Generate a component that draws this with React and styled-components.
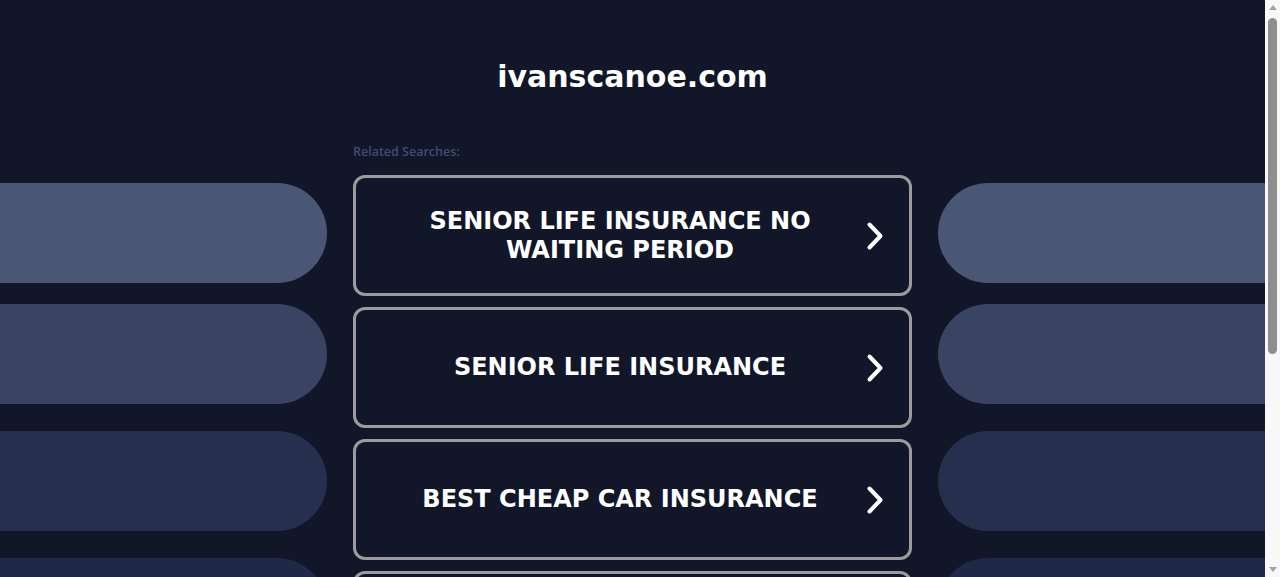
import React from "react";
import styled, { createGlobalStyle } from "styled-components";

const Global = createGlobalStyle`
  html, body { margin: 0; padding: 0; background: #111729; height: 100%; overflow: hidden; }
  body { font-family: "DejaVu Sans", sans-serif; }
  #root { height: 100%; }
`;

const Frame = styled.div`
  display: flex;
  height: 100vh;
`;

const Page = styled.div`
  flex: 1;
  min-width: 0;
  background: #111729;
  padding-top: 58px;
  box-sizing: border-box;
  overflow: hidden;
`;

const Scrollbar = styled.div`
  width: 15px;
  flex: none;
  background: #f8f8f8;
  display: flex;
  flex-direction: column;
  align-items: center;
`;

const ScrollArrow = styled.div`
  height: 15px;
  width: 15px;
  display: flex;
  align-items: center;
  justify-content: center;
  &::before {
    content: "";
    width: 0;
    height: 0;
    border-left: 4.5px solid transparent;
    border-right: 4.5px solid transparent;
    ${(p) =>
      p.$dir === "up"
        ? "border-bottom: 5px solid #a3a3a3;"
        : "border-top: 5px solid #a3a3a3;"}
  }
`;

const ScrollTrack = styled.div`
  flex: 1;
  width: 100%;
  display: flex;
  flex-direction: column;
  align-items: center;
`;

const ScrollThumb = styled.div`
  margin-top: 3px;
  width: 9px;
  height: 336px;
  border-radius: 5px;
  background: #8e8e8e;
`;

const Title = styled.h1`
  margin: 0;
  text-align: center;
  color: #ffffff;
  font-family: "DejaVu Sans", sans-serif;
  font-weight: 700;
  font-size: 30px;
  line-height: 38px;
`;

const Layout = styled.div`
  display: grid;
  grid-template-columns: 1fr 559px 1fr;
  column-gap: 26px;
  align-items: start;
  margin-top: 47px;
`;

const Side = styled.div`
  display: flex;
  flex-direction: column;
  padding-top: 40px;
`;

const Pill = styled.div`
  height: 100px;
  flex: none;
  background: ${(p) => p.$color};
  margin-top: ${(p) => p.$gap}px;
  border-radius: ${(p) => (p.$side === "left" ? "0 50px 50px 0" : "50px 0 0 50px")};
`;

const Center = styled.div`
  display: flex;
  flex-direction: column;
`;

const Label = styled.div`
  font-family: "Open Sans", sans-serif;
  font-weight: 600;
  font-size: 12.5px;
  line-height: 18px;
  color: #414c6d;
  margin-bottom: 14px;
`;

const List = styled.div`
  display: flex;
  flex-direction: column;
  gap: 11px;
`;

const Result = styled.a`
  box-sizing: border-box;
  height: 121px;
  flex: none;
  border: 3px solid #9b9b9b;
  border-radius: 12px;
  display: flex;
  align-items: center;
  padding: 0 25px 0 48px;
  gap: 30px;
  text-decoration: none;
  background: #111729;
`;

const ResultText = styled.span`
  flex: 1;
  text-align: center;
  color: #ffffff;
  font-family: "DejaVu Sans", sans-serif;
  font-weight: 700;
  font-size: 24px;
  line-height: 29px;
  text-transform: uppercase;
`;

const Chevron = () => (
  <svg width="18" height="30" viewBox="0 0 18 30" fill="none">
    <polyline
      points="3.5,3.5 14.5,15 3.5,26.5"
      stroke="#ffffff"
      strokeWidth="4"
      strokeLinecap="round"
      strokeLinejoin="round"
    />
  </svg>
);

const pills = [
  { color: "#4b5574", gap: 0 },
  { color: "#3a4361", gap: 21 },
  { color: "#262f4d", gap: 27 },
  { color: "#1f2847", gap: 27 },
];

const searches = [
  "Senior Life Insurance No Waiting Period",
  "Senior Life Insurance",
  "Best Cheap Car Insurance",
  "Medicare Supplement Plans",
];

export default function App() {
  return (
    <>
      <Global />
      <Frame>
        <Page>
          <Title>ivanscanoe.com</Title>
          <Layout>
            <Side>
              {pills.map((p, i) => (
                <Pill key={i} $color={p.color} $gap={p.gap} $side="left" />
              ))}
            </Side>
            <Center>
              <Label>Related Searches:</Label>
              <List>
                {searches.map((s) => (
                  <Result key={s} href="#">
                    <ResultText>{s}</ResultText>
                    <Chevron />
                  </Result>
                ))}
              </List>
            </Center>
            <Side>
              {pills.map((p, i) => (
                <Pill key={i} $color={p.color} $gap={p.gap} $side="right" />
              ))}
            </Side>
          </Layout>
        </Page>
        <Scrollbar aria-hidden="true">
          <ScrollArrow $dir="up" />
          <ScrollTrack>
            <ScrollThumb />
          </ScrollTrack>
          <ScrollArrow $dir="down" />
        </Scrollbar>
      </Frame>
    </>
  );
}
